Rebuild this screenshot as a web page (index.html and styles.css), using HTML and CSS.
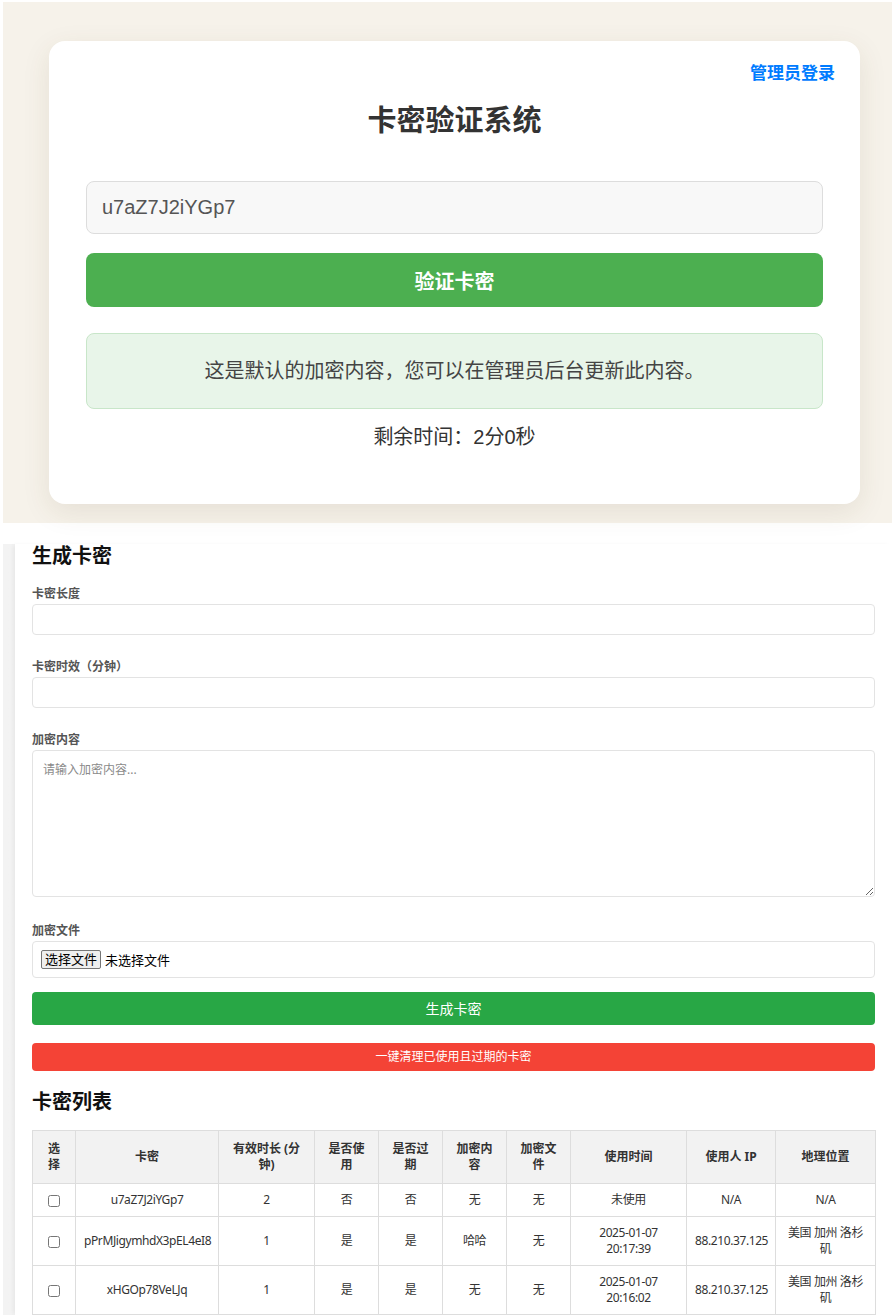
FILE: index.html
```html
<!DOCTYPE html>
<html lang="zh-CN">
<head>
    <meta charset="UTF-8">
    <meta name="viewport" content="width=device-width, initial-scale=1.0">
    <title>卡密验证系统</title>
    <link rel="stylesheet" href="styles.css">
</head>
<body>
    <div class="verify-page">
        <div class="card">
            <div class="card-top">
                <a class="admin-link" href="#">管理员登录</a>
            </div>
            <h1 class="title">卡密验证系统</h1>
            <input type="text" class="key-input" value="u7aZ7J2iYGp7">
            <button class="verify-btn">验证卡密</button>
            <div class="message">这是默认的加密内容，您可以在管理员后台更新此内容。</div>
            <p class="countdown">剩余时间：2分0秒</p>
        </div>
    </div>

    <div class="admin-page">
        <div class="admin">
            <h2 class="section-title">生成卡密</h2>
            <form class="gen-form" onsubmit="return false;">
                <div class="form-group">
                    <label class="field-label">卡密长度</label>
                    <input type="number" class="field">
                </div>
                <div class="form-group">
                    <label class="field-label">卡密时效（分钟）</label>
                    <input type="number" class="field">
                </div>
                <div class="form-group area-group">
                    <label class="field-label">加密内容</label>
                    <textarea class="field area" placeholder="请输入加密内容..."></textarea>
                </div>
                <div class="form-group last">
                    <label class="field-label">加密文件</label>
                    <div class="file-box">
                        <label class="file-btn">选择文件<input type="file" class="file-input"></label>
                        <span class="file-name">未选择文件</span>
                    </div>
                </div>
                <button class="btn btn-green">生成卡密</button>
                <button class="btn btn-red">一键清理已使用且过期的卡密</button>
            </form>

            <h2 class="section-title list-title">卡密列表</h2>
            <table class="key-table">
                <colgroup>
                    <col class="c-sel">
                    <col class="c-key">
                    <col class="c-dur">
                    <col class="c-sm">
                    <col class="c-sm">
                    <col class="c-sm">
                    <col class="c-sm">
                    <col class="c-time">
                    <col class="c-ip">
                    <col class="c-geo">
                </colgroup>
                <thead>
                    <tr>
                        <th>选择</th>
                        <th>卡密</th>
                        <th>有效时长 (分钟)</th>
                        <th>是否使用</th>
                        <th>是否过期</th>
                        <th>加密内容</th>
                        <th>加密文件</th>
                        <th>使用时间</th>
                        <th>使用人 IP</th>
                        <th>地理位置</th>
                    </tr>
                </thead>
                <tbody>
                    <tr>
                        <td><input type="checkbox"></td>
                        <td>u7aZ7J2iYGp7</td>
                        <td>2</td>
                        <td>否</td>
                        <td>否</td>
                        <td>无</td>
                        <td>无</td>
                        <td>未使用</td>
                        <td>N/A</td>
                        <td>N/A</td>
                    </tr>
                    <tr>
                        <td><input type="checkbox"></td>
                        <td>pPrMJigymhdX3pEL4eI8</td>
                        <td>1</td>
                        <td>是</td>
                        <td>是</td>
                        <td>哈哈</td>
                        <td>无</td>
                        <td>2025-01-07 20:17:39</td>
                        <td>88.210.37.125</td>
                        <td>美国 加州 洛杉矶</td>
                    </tr>
                    <tr>
                        <td><input type="checkbox"></td>
                        <td>xHGOp78VeLJq</td>
                        <td>1</td>
                        <td>是</td>
                        <td>是</td>
                        <td>无</td>
                        <td>无</td>
                        <td>2025-01-07 20:16:02</td>
                        <td>88.210.37.125</td>
                        <td>美国 加州 洛杉矶</td>
                    </tr>
                </tbody>
            </table>
        </div>
    </div>
</body>
</html>
```

FILE: styles.css
```css
body {
    margin: 0;
    background-color: #fff;
}

/* 上半部分：验证页 */
.verify-page {
    margin: 2px 0 0 3px;
    height: 521px;
    box-sizing: border-box;
    padding: 39px 32px 0 46px;
    background-color: #f6f2ea;
    font-family: "Liberation Sans", "Noto Sans CJK SC", sans-serif;
}

.card {
    width: 811px;
    box-sizing: border-box;
    padding: 20px 37px 53px;
    background-color: #fff;
    border-radius: 16px;
    box-shadow: 0 8px 28px rgba(90, 70, 30, 0.10);
}

.card-top {
    display: flex;
    justify-content: flex-end;
}

.admin-link {
    margin-right: -12px;
    font-size: 17px;
    line-height: 26px;
    font-weight: bold;
    color: #007bff;
    text-decoration: none;
}

.title {
    margin: 14px 0 0;
    font-size: 29px;
    line-height: 40px;
    text-align: center;
    color: #333;
}

.key-input {
    display: block;
    width: 100%;
    height: 53px;
    box-sizing: border-box;
    margin-top: 40px;
    padding: 0 15px;
    font-family: inherit;
    font-size: 20px;
    color: #555;
    background-color: #f8f8f8;
    border: 1px solid #ddd;
    border-radius: 8px;
}

.verify-btn {
    display: block;
    width: 100%;
    height: 54px;
    margin-top: 19px;
    font-family: inherit;
    font-size: 20px;
    font-weight: bold;
    color: #fff;
    background-color: #4caf50;
    border: none;
    border-radius: 8px;
    cursor: pointer;
}

.message {
    margin-top: 26px;
    padding: 25px 10px;
    font-size: 20px;
    line-height: 24px;
    text-align: center;
    color: #444;
    background-color: #e8f5e9;
    border: 1px solid #c8e6c9;
    border-radius: 8px;
}

.countdown {
    margin: 14px 0 0;
    font-size: 20px;
    line-height: 28px;
    text-align: center;
    color: #333;
}

/* 下半部分：管理后台 */
.admin-page {
    margin: 21px 0 0 3px;
    padding-left: 12px;
    background: linear-gradient(to right, #f3f3f3, #efefef);
    font-family: "Noto Sans", "Noto Sans CJK SC", sans-serif;
    color: #333;
}

.admin {
    padding: 0 17px;
    background-color: #fff;
    box-shadow: -3px 0 4px -1px rgba(0, 0, 0, 0.05);
}

.section-title {
    margin: 0 0 18px;
    font-size: 20px;
    line-height: 24px;
    font-weight: bold;
    color: #111;
}

.list-title {
    margin-top: 19px;
    margin-bottom: 16px;
}

.form-group {
    margin-bottom: 24px;
}

.form-group.area-group {
    margin-bottom: 26px;
}

.form-group.last {
    margin-bottom: 14px;
}

.field-label {
    display: block;
    margin-bottom: 2px;
    font-size: 12px;
    line-height: 16px;
    font-weight: bold;
    color: #555;
}

.field {
    display: block;
    width: 100%;
    height: 31px;
    box-sizing: border-box;
    padding: 6px 10px;
    font-family: inherit;
    font-size: 12px;
    border: 1px solid #e3e3e3;
    border-radius: 4px;
}

.field.area {
    height: 147px;
    padding: 10px;
    line-height: 18px;
    resize: vertical;
}

.field.area::placeholder {
    color: #8a8a8a;
}

.file-box {
    display: flex;
    align-items: center;
    gap: 4px;
    height: 37px;
    box-sizing: border-box;
    padding: 0 8px;
    border: 1px solid #e3e3e3;
    border-radius: 4px;
    font-size: 13px;
}

.file-btn {
    padding: 1px 3px;
    font-size: 13px;
    line-height: 15px;
    color: #000;
    background-color: #efefef;
    border: 1px solid #767676;
    border-radius: 2px;
}

.file-input {
    display: none;
}

.file-name {
    color: #000;
}

.btn {
    display: block;
    width: 100%;
    font-family: inherit;
    color: #fff;
    border: none;
    border-radius: 4px;
    cursor: pointer;
}

.btn-green {
    padding: 8px;
    font-size: 14px;
    line-height: 17px;
    background-color: #28a745;
}

.btn-red {
    margin-top: 18px;
    padding: 6px;
    font-size: 12px;
    line-height: 16px;
    background-color: #f44336;
}

.key-table {
    width: 843px;
    table-layout: fixed;
    border-collapse: collapse;
    font-size: 12px;
    line-height: 16px;
}

.c-sel { width: 43px; }
.c-key { width: 143px; }
.c-dur { width: 96px; }
.c-sm { width: 64px; }
.c-time { width: 116px; }
.c-ip { width: 89px; }
.c-geo { width: 100px; }

.key-table th,
.key-table td {
    border: 1px solid #ddd;
    text-align: center;
    vertical-align: middle;
}

.key-table th {
    padding: 10px;
    font-weight: bold;
    background-color: #f2f2f2;
}

.key-table td {
    padding: 8px;
    letter-spacing: -0.4px;
}

.key-table input[type="checkbox"] {
    width: 12px;
    height: 12px;
    margin: 0;
    vertical-align: middle;
}
```
